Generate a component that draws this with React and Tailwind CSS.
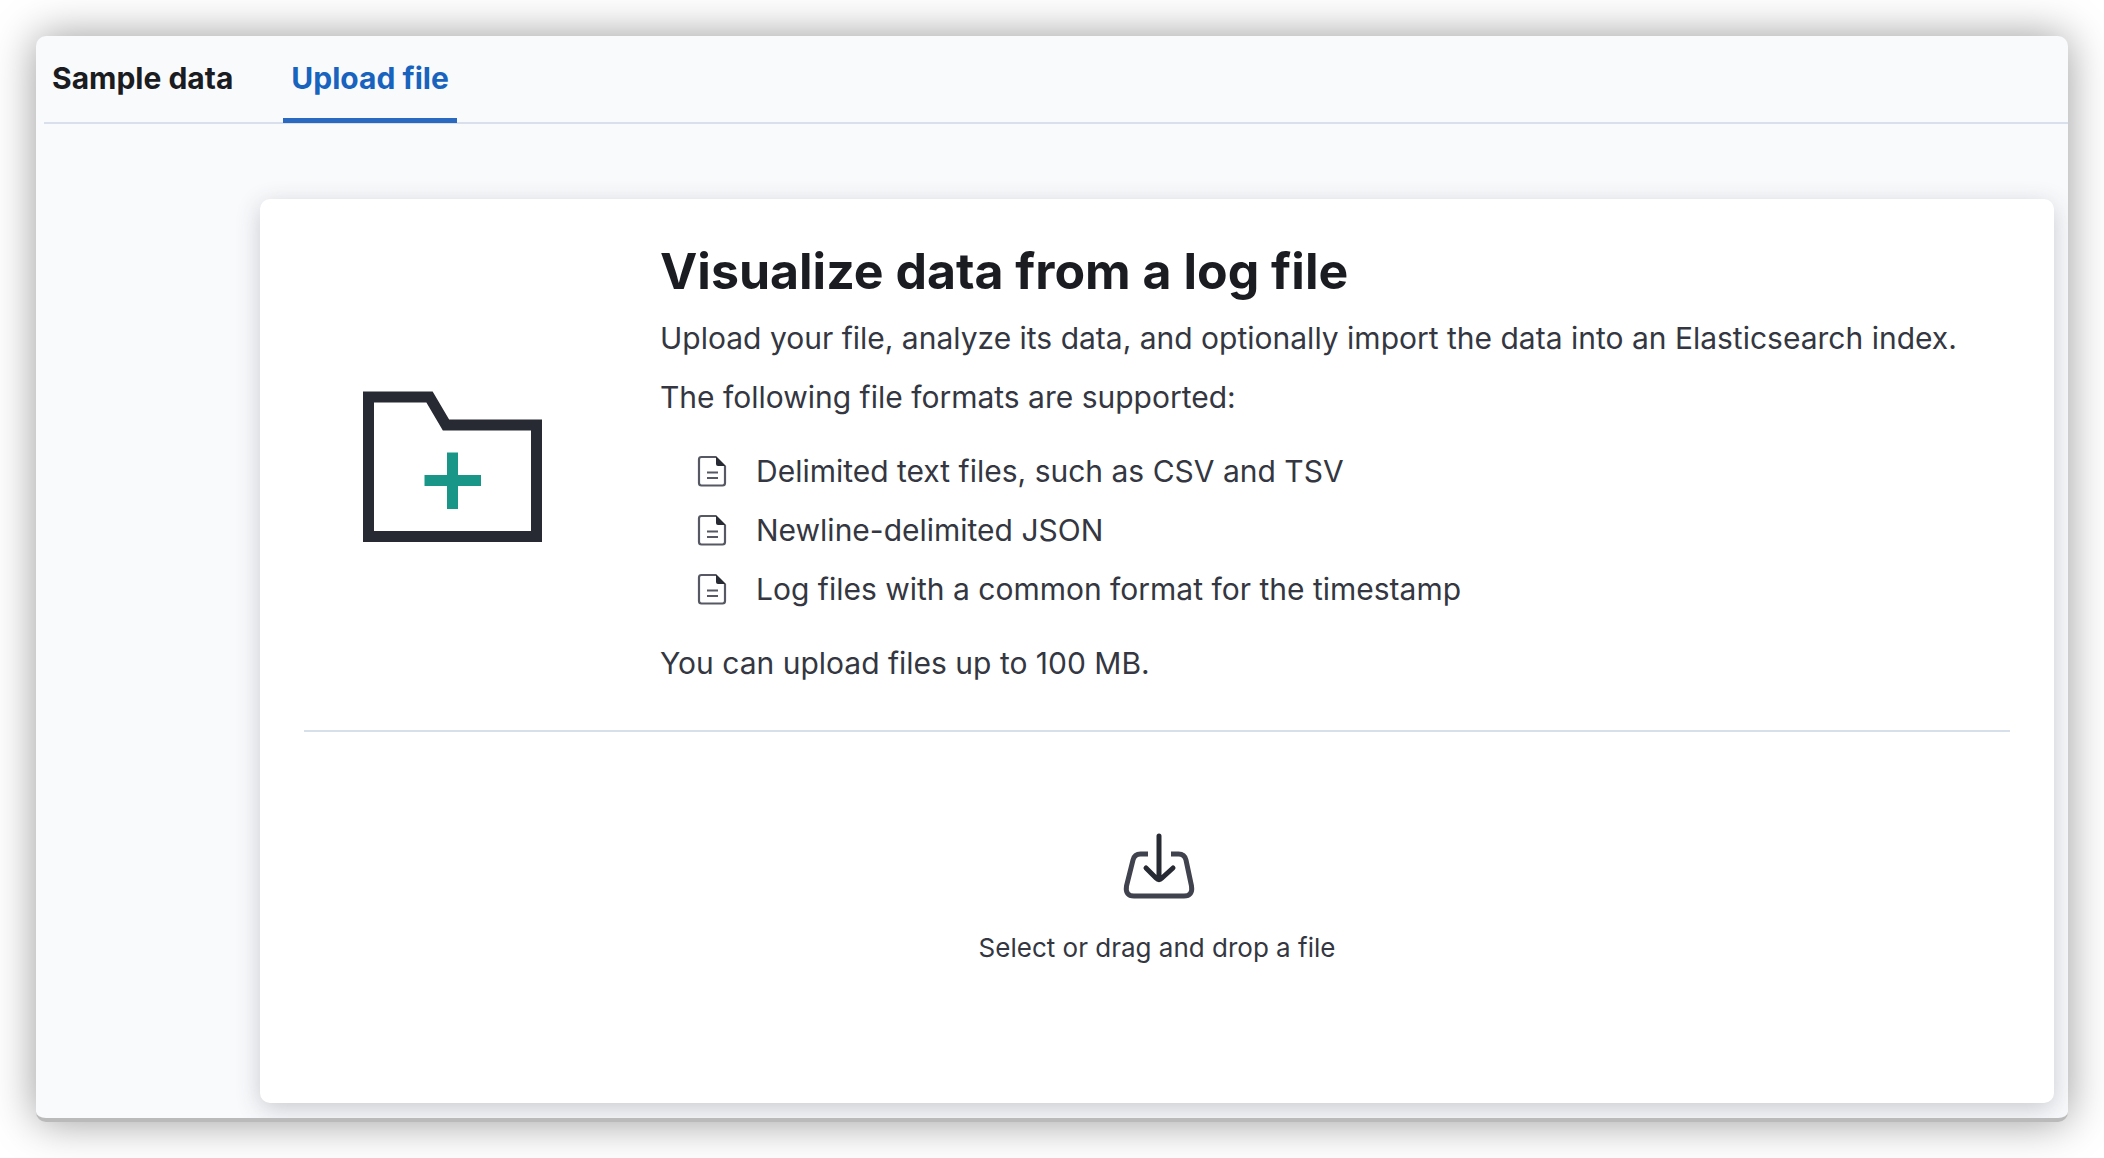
import React from "react";

const formats = [
  "Delimited text files, such as CSV and TSV",
  "Newline-delimited JSON",
  "Log files with a common format for the timestamp",
];

function FolderIcon() {
  return (
    <svg width="180" height="152" viewBox="0 0 180 152" fill="none" aria-hidden="true">
      <path d="M6.500 6H67.500L84 34H174.500V145.500H6.500Z" stroke="#272a33" strokeWidth="11" />
      <path d="M90.500 61.500V118M62.500 89.500H119" stroke="#1a9689" strokeWidth="11" />
    </svg>
  );
}

function DocumentIcon() {
  return (
    <svg className="shrink-0" width="32" height="32" viewBox="0 0 32 32" fill="none" aria-hidden="true">
      <path
        d="M20 2H5.500Q3 2 3 4.500V28Q3 30.500 5.500 30.500H26.500Q29 30.500 29 28V11"
        stroke="#565963"
        strokeWidth="2.200"
      />
      <path d="M20 1L30 11H22Q20 11 20 9Z" fill="#272a33" />
      <path d="M11 17.500H22M11 23H22" stroke="#565963" strokeWidth="2.200" />
    </svg>
  );
}

function ImportIcon() {
  return (
    <svg width="76" height="68" viewBox="0 0 76 68" fill="none" aria-hidden="true">
      <path
        d="M29 22H21.500Q15.500 22 14 28L7.500 54Q6 64 15 64H65Q74 64 72.500 54L67 28Q65.500 22 59.500 22H52"
        stroke="#40434d"
        strokeWidth="5"
      />
      <path
        d="M40 4V46M27 36L37 46Q40 49 43 46L54 36"
        stroke="#272a33"
        strokeWidth="5"
        strokeLinecap="round"
      />
    </svg>
  );
}

export default function App() {
  return (
    <div className="flex min-h-screen flex-col bg-white p-9 font-['Inter',sans-serif] text-[#343741]">
      <main className="flex flex-1 flex-col overflow-hidden rounded-[10px] border-b-4 border-[#bababa] bg-[#f9fafc] shadow-[0_0_44px_rgba(0,0,0,0.4)]">
        <nav className="ml-2 flex gap-[42px] border-b-2 border-[#d9e0ec]" aria-label="Data sources">
          <button
            type="button"
            className="-mb-px h-[87px] border-b-[5px] border-transparent px-2 pt-0.5 text-[30px] font-bold text-[#1a1c21]"
          >
            Sample data
          </button>
          <button
            type="button"
            aria-current="page"
            className="-mb-px h-[87px] border-b-[5px] border-[#2a69bf] px-2 pt-0.5 text-[30px] font-bold text-[#1763be]"
          >
            Upload file
          </button>
        </nav>

        <section className="mt-[75px] mr-3.5 mb-[15px] ml-56 flex flex-1 flex-col rounded-[10px] bg-white px-11 pt-[42px] shadow-[0_6px_24px_rgba(52,55,65,0.24)]">
          <div className="flex items-center gap-15 border-b-2 border-[#d7dfea] pb-[45px]">
            <div className="flex w-[296px] shrink-0 justify-center pt-2">
              <FolderIcon />
            </div>
            <div className="text-[30px] leading-[44px]">
              <h1 className="text-[50px] leading-[60px] font-bold text-[#1a1c21]">
                Visualize data from a log file
              </h1>
              <p className="mt-[15px]">
                Upload your file, analyze its data, and optionally import the data into an Elasticsearch index.
              </p>
              <p className="mt-[15px]">The following file formats are supported:</p>
              <ul className="my-[30px] flex flex-col gap-[15px] pl-9">
                {formats.map((format) => (
                  <li key={format} className="flex items-center gap-7">
                    <DocumentIcon />
                    {format}
                  </li>
                ))}
              </ul>
              <p>You can upload files up to 100 MB.</p>
            </div>
          </div>

          <label className="flex flex-1 cursor-pointer flex-col items-center pt-[100px]">
            <ImportIcon />
            <span className="mt-7 text-[26px] leading-[40px]">Select or drag and drop a file</span>
            <input type="file" className="sr-only" />
          </label>
        </section>
      </main>
    </div>
  );
}
